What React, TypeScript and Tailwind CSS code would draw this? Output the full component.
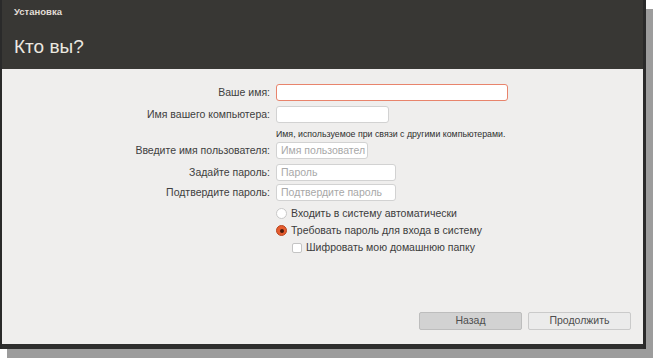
import React from "react";

const font = { fontFamily: '"Liberation Sans", "DejaVu Sans", sans-serif' };

function Field({
  label,
  width,
  placeholder,
  active = false,
  className = "",
}: {
  label: string;
  width: string;
  placeholder?: string;
  active?: boolean;
  className?: string;
}) {
  return (
    <div className={`flex items-center ${className}`}>
      <div className="w-[269px] shrink-0 pr-[1px] text-right text-[10.5px] leading-none text-[#404040]">
        {label}
      </div>
      <div
        className={`ml-[5px] flex h-[17px] items-center overflow-hidden whitespace-nowrap rounded-[3px] bg-white pl-[4px] text-[10.5px] text-[#a8a8a8] ${width} ${
          active ? "border-[1.5px] border-[#e8846c]" : "border border-[#d2d2d2]"
        }`}
      >
        {placeholder}
      </div>
    </div>
  );
}

export default function App() {
  return (
    <div className="h-[358px] w-[653px] bg-white" style={font}>
      <div className="flex h-[349px] w-[646px] flex-col border-l-2 border-r-[3px] border-[#2a2a2a] shadow-[7px_9px_0_0_#9c9c9c]">
        {/* Header */}
        <div className="flex h-[69px] shrink-0 flex-col bg-[#383734] pl-[12px]">
          <div className="mt-[6px] text-[9.5px] font-bold leading-[12px] text-[#e2ded6]">
            Установка
          </div>
          <div className="mt-[19px] text-[19px] leading-[20px] text-[#ece8e0]">
            Кто вы?
          </div>
        </div>

        {/* Form */}
        <div className="flex flex-1 flex-col bg-[#efeeed]">
          <Field label="Ваше имя:" width="w-[232px]" active className="mt-[15px]" />
          <Field label="Имя вашего компьютера:" width="w-[113px]" className="mt-[5px]" />
          <div className="ml-[274px] mt-[4px] h-[15px] text-[8.8px] leading-[15px] text-[#2e2e2e]">
            Имя, используемое при связи с другими компьютерами.
          </div>
          <Field
            label="Введите имя пользователя:"
            width="w-[92px]"
            placeholder="Имя пользовател"
            className="mt-[0px]"
          />
          <Field label="Задайте пароль:" width="w-[120px]" placeholder="Пароль" className="mt-[5px]" />
          <Field
            label="Подтвердите пароль:"
            width="w-[120px]"
            placeholder="Подтвердите пароль"
            className="mt-[3px]"
          />

          <div className="ml-[274px] mt-[4px] flex h-[17px] items-center gap-[4px] text-[10.5px] text-[#3c3c3c]">
            <span className="h-[11px] w-[11px] rounded-full border border-[#c8c8c8] bg-white" />
            Входить в систему автоматически
          </div>
          <div className="ml-[274px] flex h-[17px] items-center gap-[4px] text-[10.5px] text-[#3c3c3c]">
            <span className="flex h-[11px] w-[11px] items-center justify-center rounded-full border border-[#b8461f] bg-[#e65c2e]">
              <span className="h-[4px] w-[4px] rounded-full bg-[#4a1a0c]" />
            </span>
            Требовать пароль для входа в систему
          </div>
          <div className="ml-[290px] flex h-[17px] items-center gap-[4px] text-[10.5px] text-[#3c3c3c]">
            <span className="h-[10px] w-[10px] rounded-[2px] border border-[#c4c4c4] bg-white" />
            Шифровать мою домашнюю папку
          </div>

          <div className="mt-auto mb-[14px] flex justify-end gap-[6px] pr-[12px]">
            <button className="h-[18px] w-[103px] rounded-[2px] border border-[#bdbdbd] bg-[#d2d2d2] text-[10.5px] text-[#4e4e4e]">
              Назад
            </button>
            <button className="h-[18px] w-[103px] rounded-[2px] border border-[#cacaca] bg-[#ebebeb] text-[10.5px] text-[#4e4e4e]">
              Продолжить
            </button>
          </div>
        </div>

        {/* Bottom band */}
        <div className="h-[5px] shrink-0 bg-[#2e2e2e]" />
      </div>
    </div>
  );
}
